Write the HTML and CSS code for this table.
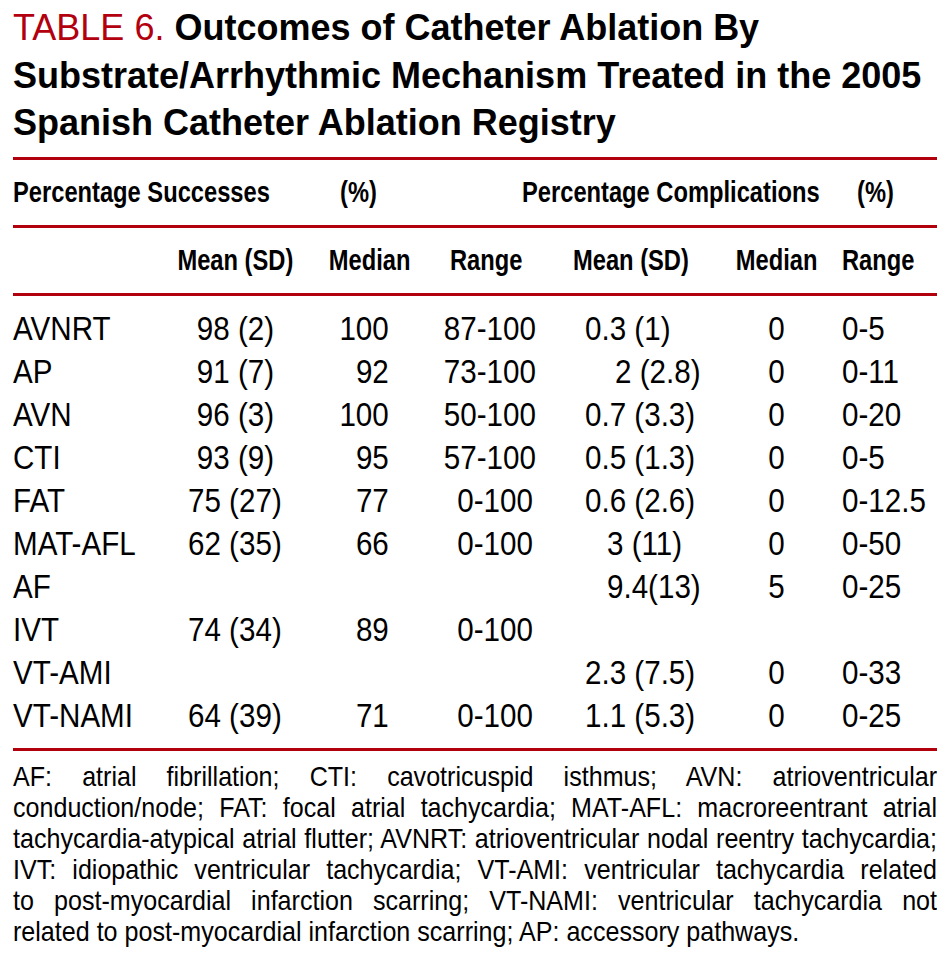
FILE: index.html
```html
<!DOCTYPE html>
<html lang="en">
<head>
<meta charset="utf-8">
<title>Table 6</title>
<link rel="stylesheet" href="styles.css">
</head>
<body>
<div class="page">
  <h1 class="title"><span class="label">TABLE 6.</span> Outcomes of Catheter Ablation By<br>Substrate/Arrhythmic Mechanism Treated in the 2005<br>Spanish Catheter Ablation Registry</h1>
  <table class="data">
    <colgroup>
      <col class="c0"><col class="c1"><col class="c2"><col class="c3"><col class="c4"><col class="c5"><col class="c6">
    </colgroup>
    <thead>
      <tr class="h1">
        <th colspan="2" class="ps"><span class="sx">Percentage Successes</span></th>
        <th class="pct1"><span class="sx">(%)</span></th>
        <th colspan="3" class="pc"><span class="sx">Percentage Complications</span></th>
        <th class="pct2"><span class="sx">(%)</span></th>
      </tr>
      <tr class="h2">
        <th></th>
        <th class="mean1"><span class="sx">Mean (SD)</span></th>
        <th class="med1"><span class="sx">Median</span></th>
        <th class="rng1"><span class="sx">Range</span></th>
        <th class="mean2"><span class="sx">Mean (SD)</span></th>
        <th class="med2"><span class="sx">Median</span></th>
        <th class="rng2"><span class="sx">Range</span></th>
      </tr>
    </thead>
    <tbody>
      <tr class="first"><td><span class="sx">AVNRT</span></td><td class="m1"><span class="sx">98 (2)</span></td><td class="d1"><span class="sx">100</span></td><td class="r1"><span class="sx">87-100</span></td><td class="m2"><span class="sx">0.3 (1)</span></td><td class="d2"><span class="sx">0</span></td><td class="r2"><span class="sx">0-5</span></td></tr>
      <tr><td><span class="sx">AP</span></td><td class="m1"><span class="sx">91 (7)</span></td><td class="d1"><span class="sx">92</span></td><td class="r1"><span class="sx">73-100</span></td><td class="m2 ia"><span class="sx">2 (2.8)</span></td><td class="d2"><span class="sx">0</span></td><td class="r2"><span class="sx">0-11</span></td></tr>
      <tr><td><span class="sx">AVN</span></td><td class="m1"><span class="sx">96 (3)</span></td><td class="d1"><span class="sx">100</span></td><td class="r1"><span class="sx">50-100</span></td><td class="m2"><span class="sx">0.7 (3.3)</span></td><td class="d2"><span class="sx">0</span></td><td class="r2"><span class="sx">0-20</span></td></tr>
      <tr><td><span class="sx">CTI</span></td><td class="m1"><span class="sx">93 (9)</span></td><td class="d1"><span class="sx">95</span></td><td class="r1"><span class="sx">57-100</span></td><td class="m2"><span class="sx">0.5 (1.3)</span></td><td class="d2"><span class="sx">0</span></td><td class="r2"><span class="sx">0-5</span></td></tr>
      <tr><td><span class="sx">FAT</span></td><td class="m1"><span class="sx">75 (27)</span></td><td class="d1"><span class="sx">77</span></td><td class="r1"><span class="sx">0-100</span></td><td class="m2"><span class="sx">0.6 (2.6)</span></td><td class="d2"><span class="sx">0</span></td><td class="r2"><span class="sx">0-12.5</span></td></tr>
      <tr><td><span class="sx">MAT-AFL</span></td><td class="m1"><span class="sx">62 (35)</span></td><td class="d1"><span class="sx">66</span></td><td class="r1"><span class="sx">0-100</span></td><td class="m2 ib"><span class="sx">3 (11)</span></td><td class="d2"><span class="sx">0</span></td><td class="r2"><span class="sx">0-50</span></td></tr>
      <tr><td><span class="sx">AF</span></td><td class="m1"></td><td class="d1"></td><td class="r1"></td><td class="m2 ib"><span class="sx">9.4(13)</span></td><td class="d2"><span class="sx">5</span></td><td class="r2"><span class="sx">0-25</span></td></tr>
      <tr><td><span class="sx">IVT</span></td><td class="m1"><span class="sx">74 (34)</span></td><td class="d1"><span class="sx">89</span></td><td class="r1"><span class="sx">0-100</span></td><td class="m2"></td><td class="d2"></td><td class="r2"></td></tr>
      <tr><td><span class="sx">VT-AMI</span></td><td class="m1"></td><td class="d1"></td><td class="r1"></td><td class="m2"><span class="sx">2.3 (7.5)</span></td><td class="d2"><span class="sx">0</span></td><td class="r2"><span class="sx">0-33</span></td></tr>
      <tr class="last"><td><span class="sx">VT-NAMI</span></td><td class="m1"><span class="sx">64 (39)</span></td><td class="d1"><span class="sx">71</span></td><td class="r1"><span class="sx">0-100</span></td><td class="m2"><span class="sx">1.1 (5.3)</span></td><td class="d2"><span class="sx">0</span></td><td class="r2"><span class="sx">0-25</span></td></tr>
    </tbody>
  </table>
  <div class="note-wrap">
    <p class="note">
      <span class="ln">AF: atrial fibrillation; CTI: cavotricuspid isthmus; AVN: atrioventricular</span>
      <span class="ln">conduction/node; FAT: focal atrial tachycardia; MAT-AFL: macroreentrant atrial</span>
      <span class="ln">tachycardia-atypical atrial flutter; AVNRT: atrioventricular nodal reentry tachycardia;</span>
      <span class="ln">IVT: idiopathic ventricular tachycardia; VT-AMI: ventricular tachycardia related</span>
      <span class="ln">to post-myocardial infarction scarring; VT-NAMI: ventricular tachycardia not</span>
      <span class="ln end">related to post-myocardial infarction scarring; AP: accessory pathways.</span>
    </p>
  </div>
</div>
</body>
</html>
```

FILE: styles.css
```css
html, body {
  margin: 0;
  padding: 0;
  background: #ffffff;
}

.page {
  width: 924px;
  padding: 4px 10px 0 13px;
  color: #000;
}

.title {
  margin: 0 0 10px 0;
  font-family: "Liberation Sans", Arial, sans-serif;
  font-size: 36px;
  line-height: 47.5px;
  font-weight: bold;
  color: #000;
  white-space: nowrap;
}

.title .label {
  font-weight: normal;
  color: #b3000f;
}

/* ---------- table ---------- */
.data {
  width: 924px;
  table-layout: fixed;
  border-collapse: collapse;
  font-family: "Liberation Sans", Arial, sans-serif;
  border-top: 3px solid #b3000f;
  border-bottom: 3px solid #b3000f;
}

.c0 { width: 147px; }
.c1 { width: 150px; }
.c2 { width: 120px; }
.c3 { width: 115px; }
.c4 { width: 180px; }
.c5 { width: 102px; }
.c6 { width: 110px; }

.sx {
  display: inline-block;
  white-space: nowrap;
  transform-origin: left center;
}

.data th {
  font-size: 30px;
  font-weight: bold;
  height: 65px;
  padding: 0;
  white-space: nowrap;
  text-align: left;
  vertical-align: middle;
  overflow: visible;
}

.data th .sx {
  transform: scaleX(0.79);
}

.data thead tr {
  border-bottom: 3px solid #b3000f;
}

.h1 .pct1 { padding-left: 30px; }
.h1 .pc { padding-left: 92px; }
.h1 .pct2 { padding-left: 30px; }

.h2 .mean1 { text-align: center; }
.h2 .mean1 .sx { transform-origin: center center; }
.h2 .med1 { text-align: center; }
.h2 .med1 .sx { transform-origin: center center; }
.h2 .rng1 { padding-left: 20px; }
.h2 .mean2 { padding-left: 28px; }
.h2 .med2 { text-align: center; }
.h2 .med2 .sx { transform-origin: center center; }
.h2 .rng2 { padding-left: 15px; }

.data td {
  font-size: 34px;
  height: 43px;
  line-height: 43px;
  padding: 0;
  white-space: nowrap;
  text-align: left;
  vertical-align: middle;
  overflow: visible;
}

.data td .sx {
  transform: scaleX(0.87);
}

.data tr.first td { padding-top: 11px; }
.data tr.last td { padding-bottom: 11px; }

.data td.m1 { text-align: center; }
.data td.m1 .sx { transform-origin: center center; }
.data td.d1 { text-align: right; padding-right: 41px; }
.data td.d1 .sx { transform-origin: right center; }
.data td.r1 { text-align: right; padding-right: 12px; }
.data td.r1 .sx { transform-origin: right center; }
.data td.m2 { padding-left: 40px; }
.data td.m2.ia { padding-left: 70px; }
.data td.m2.ib { padding-left: 62px; }
.data td.d2 { text-align: center; }
.data td.d2 .sx { transform-origin: center center; }
.data td.r2 { padding-left: 15px; }

/* ---------- footnote ---------- */
.note-wrap {
  width: 924px;
  overflow: hidden;
  margin-top: 10px;
}

.note {
  margin: 0;
  width: 1050px;
  transform: scaleX(0.88);
  transform-origin: left top;
  font-family: "Liberation Sans", Arial, sans-serif;
  font-size: 28.5px;
  line-height: 31px;
}

.note .ln {
  display: block;
  white-space: nowrap;
  text-align: justify;
  text-align-last: justify;
}

.note .ln.end {
  text-align: left;
  text-align-last: left;
}
```
